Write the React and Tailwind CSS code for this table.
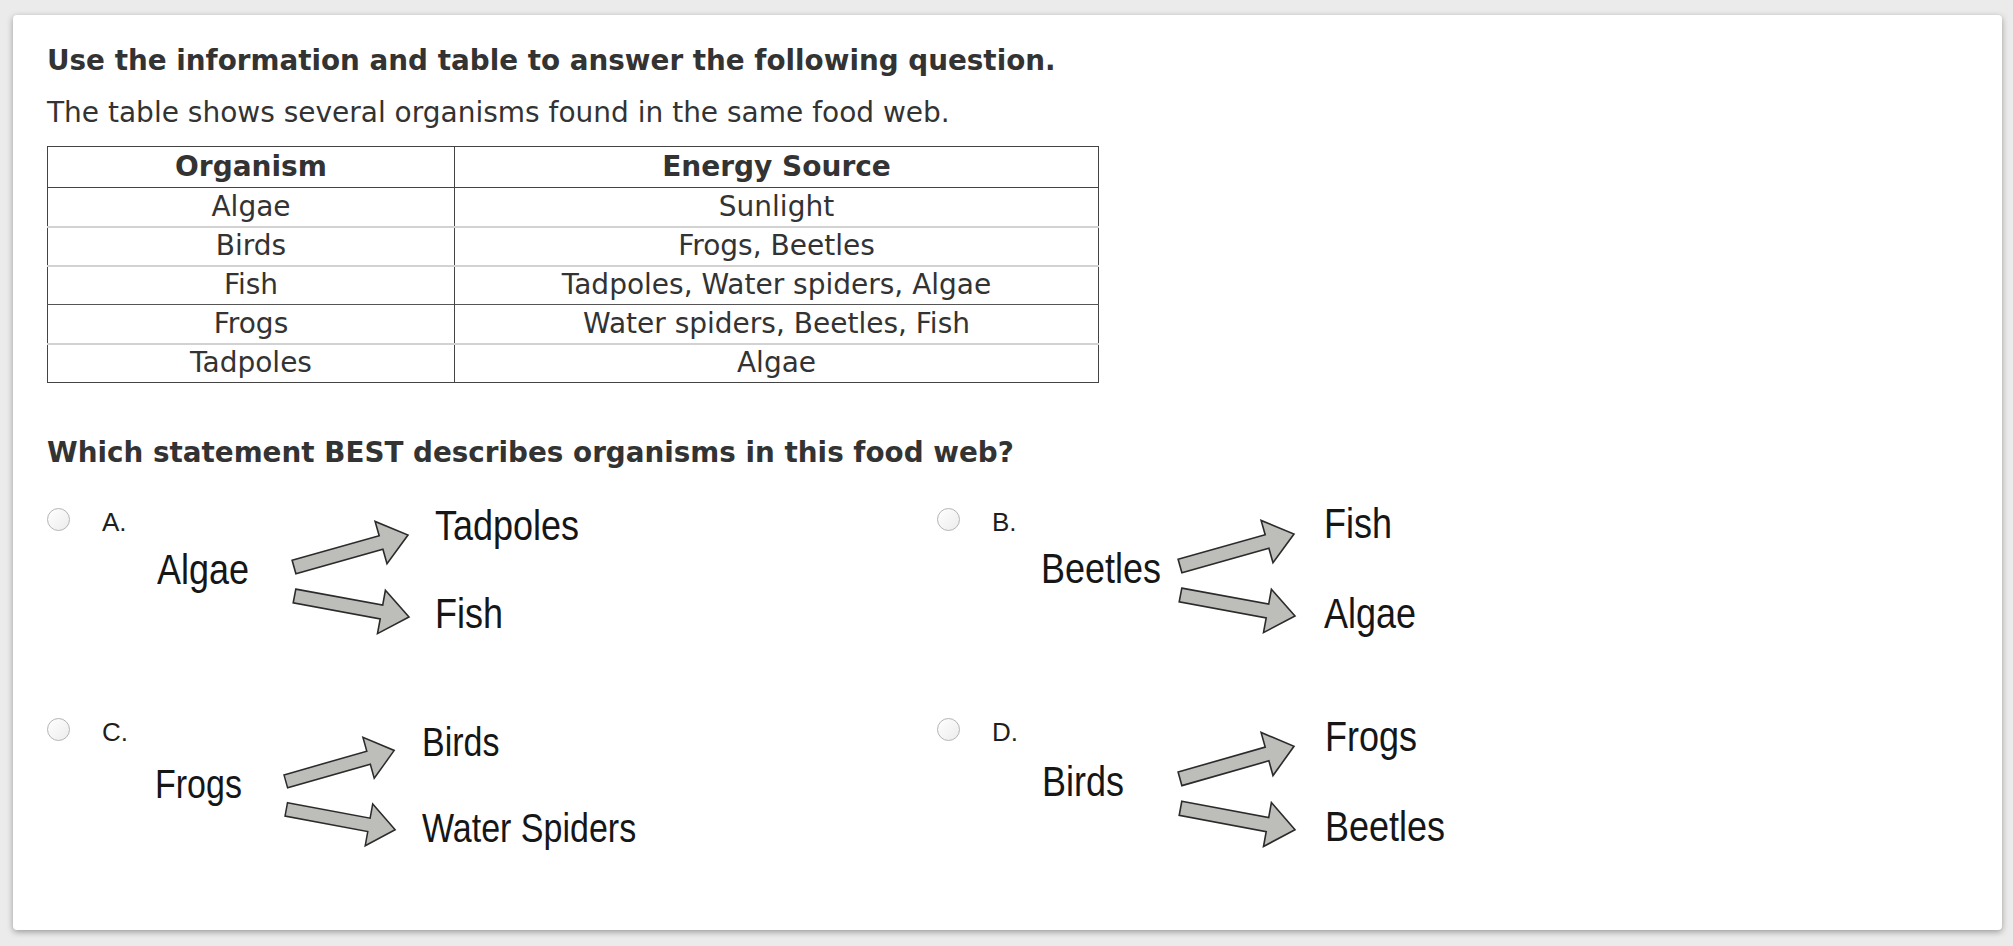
import React from 'react';

const rows = [
    { org: 'Algae', src: 'Sunlight', line: 'border-b-2 border-[#d2d2d2]' },
    { org: 'Birds', src: 'Frogs, Beetles', line: 'border-b-2 border-[#d2d2d2]' },
    { org: 'Fish', src: 'Tadpoles, Water spiders, Algae', line: 'border-b border-[#555]' },
    { org: 'Frogs', src: 'Water spiders, Beetles, Fish', line: 'border-b-2 border-[#d2d2d2]' },
    { org: 'Tadpoles', src: 'Algae', line: 'border-b border-[#444]' },
];

const options = [
    {
        letter: 'A', src: 'Algae', top: 'Tadpoles', bottom: 'Fish',
        srcCls: 'ml-[15px] w-[133px] mt-[44px] text-[36px]',
        svgCls: 'mt-[14px] w-[122px] h-[120px]',
        tgtCls: 'ml-[23px] mt-0 gap-[44px] text-[36px]',
    },
    {
        letter: 'B', src: 'Beetles', top: 'Fish', bottom: 'Algae',
        srcCls: 'ml-[9px] w-[135px] mt-[43px] text-[36px]',
        svgCls: 'mt-[13px] w-[122px] h-[120px]',
        tgtCls: 'ml-[26px] -mt-[2px] gap-[46px] text-[36px]',
    },
    {
        letter: 'C', src: 'Frogs', top: 'Birds', bottom: 'Water Spiders',
        srcCls: 'ml-[13px] w-[127px] mt-[48px] text-[34px]',
        svgCls: 'mt-[20px] w-[116px] h-[116px]',
        tgtCls: 'ml-[24px] mt-[6px] gap-[42px] text-[34px]',
    },
    {
        letter: 'D', src: 'Birds', top: 'Frogs', bottom: 'Beetles',
        srcCls: 'ml-[10px] w-[134px] mt-[46px] text-[36px]',
        svgCls: 'mt-[15px] w-[122px] h-[122px]',
        tgtCls: 'ml-[27px] mt-[1px] gap-[46px] text-[36px]',
    },
];

function Arrows({ className }) {
    return (
        <svg className={className} viewBox="0 0 122 120" preserveAspectRatio="none">
            <g fill="#bdbdb9" stroke="#2b2b2b" strokeWidth="1.6" strokeLinejoin="miter">
                <polygon points="2.1,42.3 89.2,17.8 85.1,3.4 118,17 97,45.8 92.9,31.3 5.9,55.7" />
                <polygon points="5.8,71.1 92.7,87.1 95.4,72.3 119,99 87.5,115.6 90.2,100.9 3.2,84.9" />
            </g>
        </svg>
    );
}

function Option({ o }) {
    return (
        <div className="flex items-start h-[210px] font-['Liberation_Sans',Arial,sans-serif]">
            <span className="mt-[4px] shrink-0 w-[23px] h-[23px] rounded-full border border-[#b4b4b4] bg-gradient-to-br from-white to-[#ececec]" />
            <span className="mt-[3px] ml-[32px] w-[40px] shrink-0 text-[26px] leading-[30px] text-[#1e1e1e]">{o.letter}.</span>
            <div className={`shrink-0 leading-[44px] text-[#161616] ${o.srcCls}`}>
                <span className="inline-block scale-y-[1.2]">{o.src}</span>
            </div>
            <Arrows className={`shrink-0 ${o.svgCls}`} />
            <div className={`flex flex-col leading-[44px] text-[#161616] ${o.tgtCls}`}>
                <span className="inline-block w-fit scale-y-[1.2]">{o.top}</span>
                <span className="inline-block w-fit scale-y-[1.2]">{o.bottom}</span>
            </div>
        </div>
    );
}

export default function App() {
    return (
        <div className="h-screen w-full overflow-hidden bg-[#ebebeb] pt-[15px] pl-[13px] pr-[11px]">
            <div className="h-[915px] rounded-[4px] bg-white shadow-[0_2px_6px_rgba(0,0,0,0.35)] pl-[34px] pt-[28px] font-['DejaVu_Sans',Verdana,sans-serif] text-[#333]">
                <h1 className="text-[27.8px] leading-[36px] font-bold">
                    Use the information and table to answer the following question.
                </h1>
                <p className="mt-[16px] text-[28px] leading-[36px]">
                    The table shows several organisms found in the same food web.
                </p>
                <table className="mt-[15px] w-[1052px] border-collapse border border-[#444] text-[28px] text-center">
                    <thead>
                        <tr className="h-[41px] border-b border-[#444]">
                            <th className="w-[407px] border-r border-[#444] font-bold leading-[34px]">Organism</th>
                            <th className="font-bold leading-[34px]">Energy Source</th>
                        </tr>
                    </thead>
                    <tbody>
                        {rows.map((r) => (
                            <tr key={r.org} className={`h-[39px] ${r.line}`}>
                                <td className="border-r border-[#444] leading-[34px]">{r.org}</td>
                                <td className="leading-[34px]">{r.src}</td>
                            </tr>
                        ))}
                    </tbody>
                </table>
                <h2 className="mt-[52px] text-[27.8px] leading-[36px] font-bold">
                    Which statement BEST describes organisms in this food web?
                </h2>
                <div className="mt-[33px] grid grid-cols-[890px_1fr]">
                    {options.map((o) => (
                        <Option key={o.letter} o={o} />
                    ))}
                </div>
            </div>
        </div>
    );
}
